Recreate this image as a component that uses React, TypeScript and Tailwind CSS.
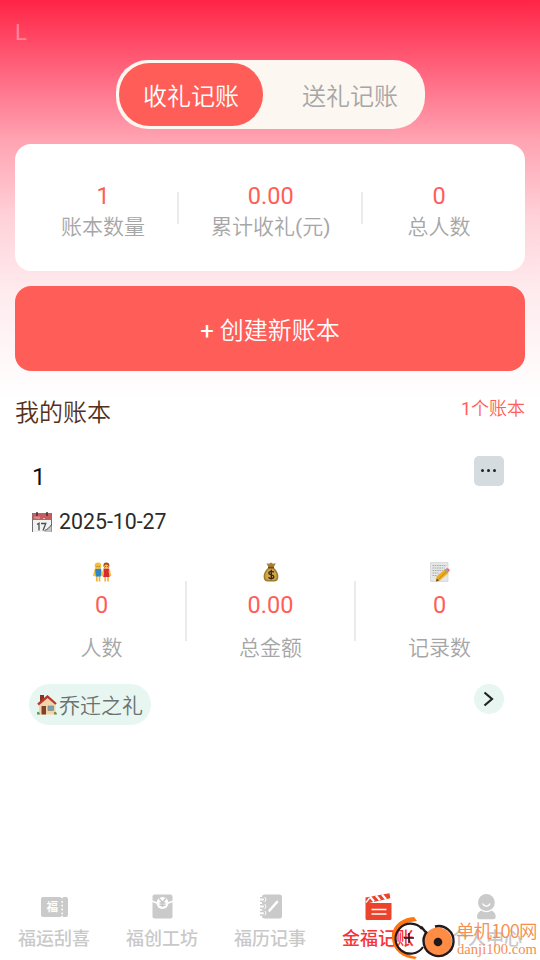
import type { ReactNode } from "react";
import clsx from "clsx";

function CalendarIcon() {
  return (
    <svg viewBox="0 0 20 20" className="h-5 w-5 shrink-0">
      <rect x="0.5" y="1.5" width="19" height="19" fill="#f1f2f2" stroke="#6f6f6f" />
      <rect x="0.5" y="1" width="19" height="7" fill="#c65e61" />
      <path d="M3 6.500v-2M5 7V4.500M7 7V4.500M11 6.500h2" stroke="#e9b9b9" />
      <path d="M5 0v4M15 0v4" stroke="#3b2b2b" strokeWidth="1.400" />
      <path d="M5 12.500l2-1.300V18.500M9 11.500h4.800L11 18.500" fill="none" stroke="#4c4f52" strokeWidth="1.300" />
      <path d="M14 18c2-1 3.500-3 5.500-5v7H12z" fill="#c1c3c4" />
      <path d="M12.500 18.500c3-1 5-3 7-6" fill="none" stroke="#4b4b4b" />
    </svg>
  );
}

function PeopleIcon() {
  return (
    <svg viewBox="0 0 20 20" className="h-5 w-5">
      <path d="M4.800 14v5.500M7.500 14v5.500M13.200 14v5.500M16 14v5.500" stroke="#f0b53c" strokeWidth="1.700" />
      <path d="M3.500 7.500L1.800 14M8.500 8l1.700 6M11.700 8l-1.500 6M17 7.500l1.500 6.500" fill="none" stroke="#f8bd38" strokeWidth="1.700" />
      <path d="M3.200 6.500h6l-.3 8H3.500z" fill="#2f86c4" />
      <path d="M11.400 6.500h5.800l-.5 3.500 1 5h-6.500l.8-5z" fill="#d52d2d" />
      <circle cx="6" cy="3.800" r="3.300" fill="#f6bd35" />
      <circle cx="14.400" cy="3.500" r="3" fill="#a54a1c" />
      <circle cx="14.400" cy="4.600" r="2.200" fill="#f8bd42" />
      <path d="M4.700 4.500h.8M6.800 4.500h.8M13.300 4.500h.8M15.200 4.500h.8" stroke="#754b1d" strokeWidth=".8" />
    </svg>
  );
}

function MoneyBagIcon() {
  return (
    <svg viewBox="0 0 20 20" className="h-5 w-5">
      <path d="M5.500 1.200l2.500.6L10 .500l2 1.300 2.800-.6-2.200 4.300H7.500z" fill="#a98034" />
      <path d="M7.500 5.500h5c3 2.500 5.200 6 4.800 10-.2 2.700-1.500 4-4 4H6.700c-2.500 0-3.800-1.300-4-4-.4-4 1.800-7.500 4.800-10z" fill="#a27b2c" />
      <path d="M8 7c-3 2-4 5-3.800 8 .2 2 1 3 3 3h5.500c2 0 3-1 3-3 .1-3-1-6-4-8z" fill="#cfa64b" />
      <path d="M7 5.500h6" stroke="#704d1d" strokeWidth="1.500" />
      <path d="M12.800 10.300c-1.300-1.500-5-1.200-5 .7 0 2.500 5 1.300 5 3.800 0 2.200-4 2.300-5.300.5M10.300 7.800v9.700" fill="none" stroke="#362b17" strokeWidth="1.400" />
    </svg>
  );
}

function MemoIcon() {
  return (
    <svg viewBox="0 0 20 20" className="h-5 w-5">
      <path d="M.5.500h17.500v19H.5z" fill="#e5e6e6" stroke="#d0d2d2" strokeWidth=".7" />
      <path d="M2.500 3.500h13M2.500 6h12M2.500 8.500h10M2.500 11h6M2.500 13.500h4" stroke="#9a9d9d" strokeWidth=".8" strokeDasharray="1.600 .7" />
      <path d="M6.500 14.500l8.500-7.500L18.500 11l-9 7.700L6 19.500z" fill="#edae21" />
      <path d="M8.500 17l8-7.500" stroke="#c17b15" strokeWidth=".9" />
      <path d="M6 19.500l.8-3 2.200 2z" fill="#5d4930" />
      <path d="M14.500 8l1.500-1.300 2.800 3-1.500 1.400z" fill="#8da0ab" />
      <path d="M16 6.700c1.500-1.700 5 .8 3 3z" fill="#e75e70" />
    </svg>
  );
}

function HouseIcon() {
  return (
    <svg viewBox="0 0 20 20" className="h-5 w-5 shrink-0">
      <path d="M3 0h4v7H3z" fill="#8b3024" />
      <path d="M2 10L11 2l7.500 8v9.500H2z" fill="#f1d5aa" />
      <path d="M1 9.500L10.500 1.500 19 9" fill="none" stroke="#bc352b" strokeWidth="2.300" />
      <path d="M4.500 11h4.500v8.500H4.500z" fill="#83402c" />
      <path d="M11 11h5.500v4.500H11z" fill="#67a5c9" stroke="#a8825b" strokeWidth=".7" />
      <path d="M0 17.500c1-1.500 2.500-1 3 2H0zM17 17.500c1.200-1.500 2.500-1 3 2h-3z" fill="#659544" />
    </svg>
  );
}

function TicketIcon() {
  return (
    <svg viewBox="0 0 28 30" className="h-[30px] w-7">
      <path d="M3 5h17.500l1.500 1.500L23.500 5H26a2 2 0 0 1 2 2v16a2 2 0 0 1-2 2h-2.500L22 23.500 20.500 25H3a2 2 0 0 1-2-2V7a2 2 0 0 1 2-2z" fill="#cacaca" />
      <path d="M22.200 9v14" stroke="#fff" strokeWidth="1.500" strokeDasharray="1.800 2" />
      <text x="6.500" y="19.300" fontSize="11.500" fontWeight="700" fill="#fff">福</text>
    </svg>
  );
}

function EnvelopeIcon() {
  return (
    <svg viewBox="0 0 28 30" className="h-[30px] w-7">
      <path d="M6.500 2.500h16a2 2 0 0 1 2 2v20a2 2 0 0 1-2 2h-16a2 2 0 0 1-2-2v-20a2 2 0 0 1 2-2z" fill="#cacaca" />
      <path d="M4 9c3 1.500 4.500 2 5.500 2M19.500 11c1.500 0 3-.5 5.500-2" fill="none" stroke="#fff" strokeWidth="1.600" />
      <circle cx="14.500" cy="11" r="6" fill="#fff" />
      <path d="M11.200 6.500l3.300 4 3.300-4M14.500 10.200V15M11.500 11h6M11.500 13.300h6" fill="none" stroke="#c4c4c4" strokeWidth="1.400" />
    </svg>
  );
}

function NotebookIcon() {
  return (
    <svg viewBox="0 0 28 30" className="h-[30px] w-7">
      <rect x="6" y="2.500" width="20" height="24" rx="2.500" fill="#cacaca" />
      <path d="M5 7.500h3M5 14.500h3M5 21.200h3" stroke="#fff" strokeWidth="4.800" strokeLinecap="round" />
      <path d="M4 5.800h3a1.700 1.700 0 0 1 0 3.400H4M4 12.800h3a1.700 1.700 0 0 1 0 3.400H4M4 19.500h3a1.700 1.700 0 0 1 0 3.400H4" fill="none" stroke="#cacaca" strokeWidth="1.500" />
      <path d="M13.500 18.500L21 10" stroke="#fff" strokeWidth="2.600" strokeLinecap="round" />
    </svg>
  );
}

function ClapperIcon() {
  return (
    <svg viewBox="0 0 28 30" className="h-[30px] w-7">
      <path d="M1.500 5.500L25.500 1.200l.8 5L5 11h22.500v15.500A1.500 1.500 0 0 1 26 28H3a1.500 1.500 0 0 1-1.500-1.500z" fill="#ec432d" />
      <path d="M6 4.500l4 5M12 3.500l4 4.800M18 2.500l4 4.800" stroke="#fff" strokeWidth="2.200" />
      <path d="M2 10.500l3.500-4.500" stroke="#fff" strokeWidth="1.300" />
      <path d="M7.500 17.500h15M7.500 22h15" stroke="#fff" strokeWidth="1.500" />
    </svg>
  );
}

function UserIcon() {
  return (
    <svg viewBox="0 0 28 30" className="h-[30px] w-7">
      <circle cx="14.400" cy="10.500" r="8.400" fill="#cacaca" />
      <path d="M9.300 18.500c3 2.200 7.200 2.200 10.200 0 2.800 1.300 4.200 3.700 4.200 6 0 1.700-.8 2.700-2.500 2.700H7.500C5.800 27.200 5 26.200 5 24.500c0-2.300 1.500-4.700 4.300-6z" fill="#cacaca" />
      <path d="M11 12c1.300 3 5.500 3 6.800 0" fill="none" stroke="#fff" strokeWidth="1.500" strokeLinecap="round" />
    </svg>
  );
}

function Stat({ value, label, unit }: { value: string; label: string; unit?: string }) {
  return (
    <div className="flex flex-col items-center whitespace-nowrap pt-[8px]">
      <span className="text-[23.5px] font-normal leading-[30px] text-[#ff5e58]">{value}</span>
      <span className="text-[21px] leading-[32px] text-[#a6a6a6]">
        {label}
        {unit && (
          <>
            <span className="font-normal">(</span>
            {unit}
            <span className="font-normal">)</span>
          </>
        )}
      </span>
    </div>
  );
}

function BookStat({ icon, value, label }: { icon: ReactNode; value: string; label: string }) {
  return (
    <div className="flex flex-1 flex-col items-center">
      {icon}
      <span className="mt-2 text-[23.5px] font-normal leading-[31px] text-[#ff5e58]">{value}</span>
      <span className="mt-[11px] text-[21px] leading-[32px] text-[#a6a6a6]">{label}</span>
    </div>
  );
}

const TABS = [
  { name: "福运刮喜", icon: <TicketIcon /> },
  { name: "福创工坊", icon: <EnvelopeIcon /> },
  { name: "福历记事", icon: <NotebookIcon /> },
  { name: "金福记账", icon: <ClapperIcon />, active: true },
  { name: "个人中心", icon: <UserIcon /> },
];

function Watermark() {
  return (
    <div className="absolute bottom-0 left-[390px] flex h-[44px] w-[150px]">
      <svg viewBox="0 0 66 44" className="h-[44px] w-[66px] shrink-0">
        <path d="M24 1C10 2 1 11 2 23c1 11 10 19 23 20l2-2C14 39 6 32 6 22 6 13 13 6 27 5z" fill="#ff7510" />
        <path d="M32 13a15 15 0 1 0 1 18" fill="none" stroke="#24191a" strokeWidth="2.200" />
        <path d="M14 22h10M19 17v10" stroke="#24191a" strokeWidth="1.600" />
        <path d="M31 10.500l5 6" stroke="#24191a" strokeWidth="2.400" />
        <circle cx="48" cy="25.500" r="14" fill="#ff8c45" />
        <path d="M45 10.500a15 15 0 1 1-8 5" fill="none" stroke="#24191a" strokeWidth="2.400" />
        <circle cx="48" cy="26" r="4.300" fill="#24191a" />
      </svg>
      <div className="flex flex-col whitespace-nowrap text-[#f58e4f]">
        <span className="mt-[3px] font-['Noto_Sans_CJK_SC',sans-serif] text-[18.5px] leading-[22px] tracking-[-0.9px]">单机100网</span>
        <span className="mt-[2px] pl-px font-['Liberation_Serif',serif] text-[14.6px] font-normal leading-[13px]">danji100.com</span>
      </div>
    </div>
  );
}

export default function App() {
  return (
    <div className="relative flex h-[960px] w-[540px] flex-col overflow-hidden bg-white bg-[linear-gradient(180deg,#ff2446_0px,#ff5b76_60px,#ffa3b2_140px,#ffd0d8_215px,#feebee_290px,#ffffff_400px)] font-['Roboto','Noto_Sans_CJK_SC',sans-serif] font-[350]">
      <div className="h-[60px] px-[15px] pt-[17px] text-[22px] font-normal leading-[31px] text-white/35">L</div>

      <div className="mx-auto flex h-[69px] w-[309px] rounded-[32px] bg-[#fcf7f0] p-[3px] text-2xl leading-[68px]">
        <div className="h-[63px] w-36 rounded-[31px] bg-[#ff5e58] pl-px text-center text-white">收礼记账</div>
        <div className="flex-1 pl-4 text-center text-[#a6a6a6]">送礼记账</div>
      </div>

      <section className="mx-[15px] mt-[15px] flex h-[127px] items-center gap-8 rounded-2xl bg-white pl-[46px]">
        <Stat value="1" label="账本数量" />
        <div className="h-8 w-0.5 bg-[#ebebeb]" />
        <Stat value="0.00" label="累计收礼" unit="元" />
        <div className="mr-[13px] -ml-0.5 h-8 w-0.5 bg-[#ebebeb]" />
        <Stat value="0" label="总人数" />
      </section>

      <button className="mx-[15px] mt-[15px] h-[85px] rounded-2xl bg-[#ff5e58] pt-1 text-2xl text-white">
        <span className="font-normal">+</span> 创建新账本
      </button>

      <div className="mt-[23px] flex justify-between px-[15px]">
        <h2 className="pt-[2px] text-2xl leading-[35px] text-[#54301a]">我的账本</h2>
        <span className="text-lg leading-[29px] text-[#ff5e58]">
          <span className="font-normal">1</span>个账本
        </span>
      </div>

      <section className="mt-[25px] pl-[18px] pr-[17px]">
        <div className="flex justify-between pl-[14px] pr-[19px]">
          <span className="mt-[6px] text-2xl font-normal leading-[31px] text-[#101010]">1</span>
          <button className="flex h-[30px] w-[30px] items-center justify-center gap-[3px] rounded-[5px] bg-[#d5dcdf] pb-px pr-px">
            <i className="h-[3px] w-[3px] rounded-full bg-[#222]" />
            <i className="h-[3px] w-[3px] rounded-full bg-[#222]" />
            <i className="h-[3px] w-[3px] rounded-full bg-[#222]" />
          </button>
        </div>
        <div className="mt-[15px] flex items-center pl-[14px] text-[21.3px] font-normal leading-[28px] text-[#2b2b2b]">
          <CalendarIcon />
          <span className="ml-[7px]">2025-10-27</span>
        </div>

        <div className="mt-[26px] flex h-[102px] items-center">
          <BookStat icon={<PeopleIcon />} value="0" label="人数" />
          <div className="mb-1 h-[60px] w-0.5 bg-[#ebebeb]" />
          <BookStat icon={<MoneyBagIcon />} value="0.00" label="总金额" />
          <div className="mb-1 h-[60px] w-0.5 bg-[#ebebeb]" />
          <BookStat icon={<MemoIcon />} value="0" label="记录数" />
        </div>

        <div className="mt-5 flex items-start justify-between pl-[11px] pr-[19px]">
          <div className="flex h-[41px] items-center rounded-full bg-[#e7f6f1] px-2 text-[21px] text-[#6b716e]">
            <HouseIcon />
            <span className="ml-0.5 pt-[5px]">乔迁之礼</span>
          </div>
          <button className="flex h-[30px] w-[30px] items-center justify-center rounded-full bg-[#e7f6f1] pr-0.5">
            <svg viewBox="0 0 16 16" className="h-4 w-4">
              <path d="M4.500 1.500L12 8l-7.500 6.500" fill="none" stroke="#222" strokeWidth="2.200" />
            </svg>
          </button>
        </div>
      </section>

      <nav className="mt-auto flex h-[68px]">
        {TABS.map((tab) => (
          <div key={tab.name} className="flex w-[108px] flex-col items-center">
            {tab.icon}
            <span
              className={clsx(
                "mt-[3px] text-lg font-medium leading-[28px]",
                tab.active ? "text-[#fa3436]" : "text-[#c9c9c9]",
              )}
            >
              {tab.name}
            </span>
          </div>
        ))}
      </nav>
      <Watermark />
    </div>
  );
}
